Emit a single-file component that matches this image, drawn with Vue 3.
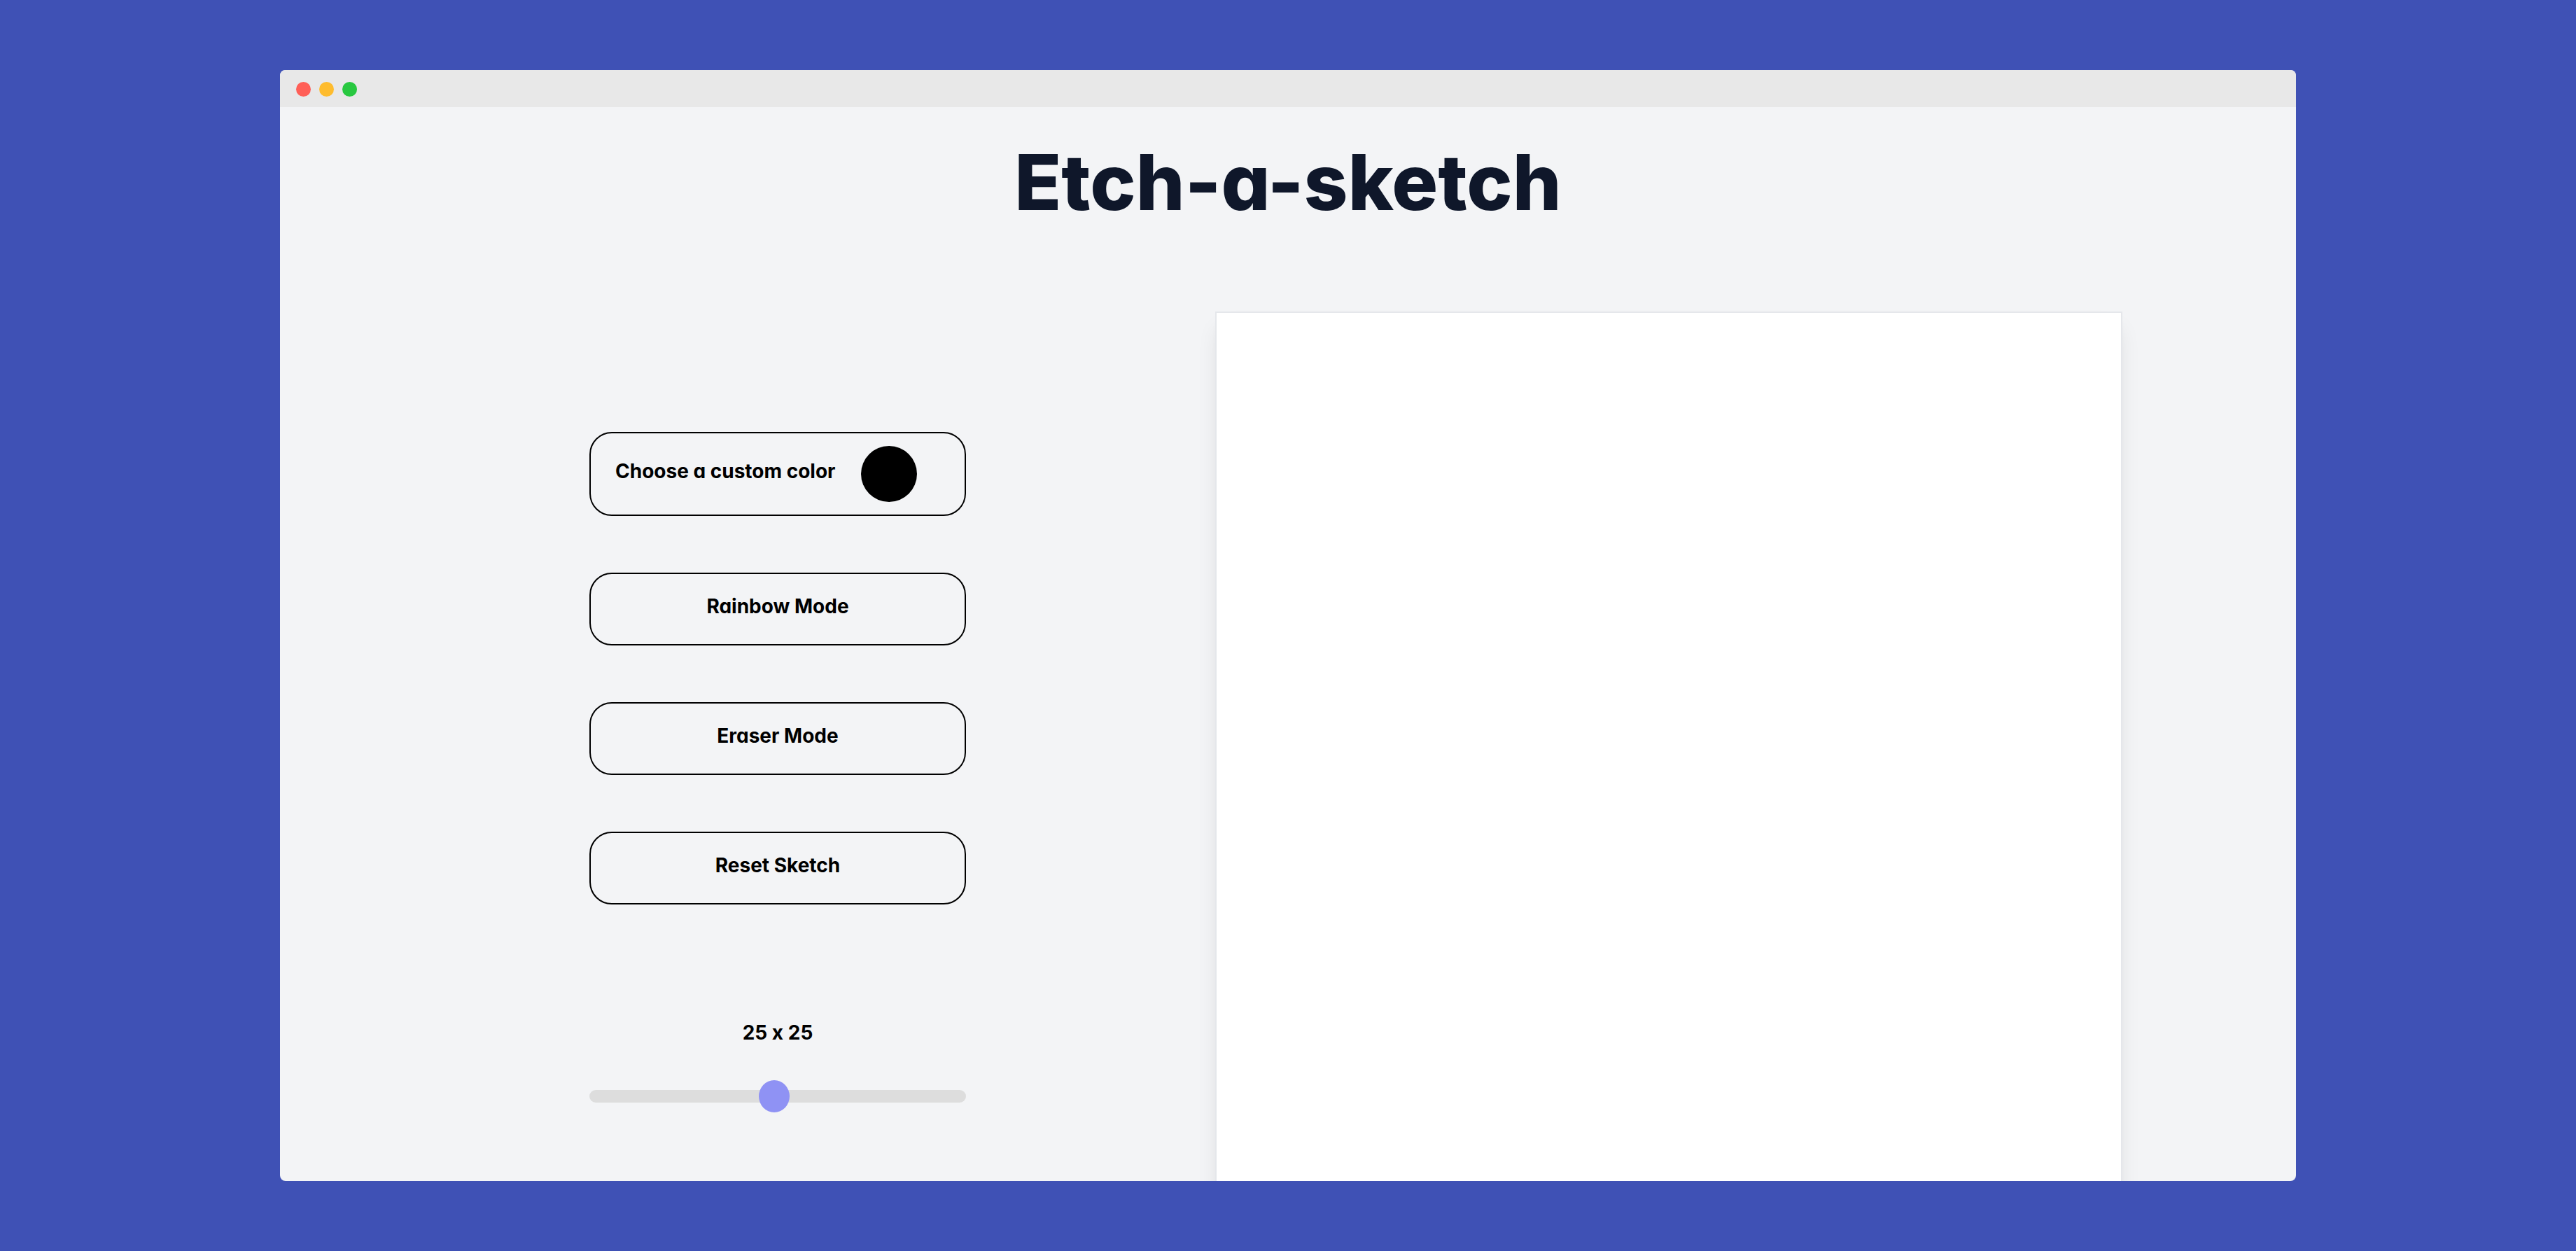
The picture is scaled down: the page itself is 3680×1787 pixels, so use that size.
<script setup>
import { ref } from 'vue'

const color = ref('#000000')
const size = ref(25)
const mode = ref('color')
</script>

<template>
  <main class="window">
    <div class="titlebar">
      <span class="dot close"></span>
      <span class="dot minimize"></span>
      <span class="dot expand"></span>
    </div>
    <h1 class="title">Etch-a-sketch</h1>
    <div class="layout">
      <section class="panel">
        <div class="picker">
          <label for="color">Choose a custom color</label>
          <input id="color" v-model="color" class="swatch" type="color" />
        </div>
        <button class="action" type="button" @click="mode = 'rainbow'">Rainbow Mode</button>
        <button class="action" type="button" @click="mode = 'eraser'">Eraser Mode</button>
        <button class="action" type="button" @click="mode = 'color'">Reset Sketch</button>
        <div class="size">
          <label for="size">{{ size }} x {{ size }}</label>
          <input id="size" v-model="size" class="slider" type="range" min="1" max="50" />
        </div>
      </section>
      <div class="canvas"></div>
    </div>
  </main>
</template>

<style>
body {
  background: #3f51b5;
}
</style>

<style scoped>
.window,
.window * {
  box-sizing: border-box;
}

.window {
  height: calc(100vh - 200px);
  margin: 100px 400px;
  overflow: hidden;
  border-radius: 8px;
  background: #f3f4f6;
  color: #000;
  font-family: Inter, "Open Sans", sans-serif;
  font-feature-settings: "cv11", "calt" 0;
  font-size: 28px;
  font-weight: 700;
  line-height: 40px;
}

.titlebar {
  display: flex;
  align-items: center;
  gap: 12px;
  height: 53px;
  padding: 2px 23px 0;
  background: #e8e8e8;
}

.dot {
  width: 21px;
  height: 21px;
  border-radius: 50%;
}

.close {
  background: #ff5f57;
}

.minimize {
  background: #febc2e;
}

.expand {
  background: #28c840;
}

.title {
  margin: 42px 0 120px;
  color: #0f172a;
  font-size: 110px;
  font-weight: 800;
  line-height: 130px;
  text-align: center;
}

.layout {
  display: grid;
  grid-template-columns: 442fr 538fr 356fr 1296fr 248fr;
  align-items: start;
}

.panel {
  display: flex;
  grid-column: 2;
  flex-direction: column;
  gap: 81px;
  padding-top: 172px;
}

.picker {
  display: flex;
  align-items: center;
  justify-content: space-between;
  height: 120px;
  padding: 0 68px 0 35px;
  border: 2px solid #000;
  border-radius: 32px;
  white-space: nowrap;
}

.picker label {
  padding-bottom: 8px;
}

.swatch {
  flex: none;
  width: 80px;
  height: 80px;
  padding: 0;
  appearance: none;
  border: 0;
  background: none;
  cursor: pointer;
}

.swatch::-webkit-color-swatch-wrapper {
  padding: 0;
}

.swatch::-webkit-color-swatch {
  border: 0;
  border-radius: 50%;
}

.action {
  height: 104px;
  padding: 0 36px 8px;
  border: 2px solid #000;
  border-radius: 32px;
  background: transparent;
  color: inherit;
  font: inherit;
  font-feature-settings: inherit;
  cursor: pointer;
}

.size {
  display: flex;
  flex-direction: column;
  align-items: center;
  gap: 48px;
  padding-top: 82px;
}

.slider {
  width: 100%;
  height: 46px;
  margin: 0;
  appearance: none;
  background: transparent;
}

.slider::-webkit-slider-runnable-track {
  height: 18px;
  border-radius: 9px;
  background: #ddd;
}

.slider::-webkit-slider-thumb {
  width: 44px;
  height: 46px;
  margin-top: -14px;
  appearance: none;
  border-radius: 50%;
  background: #8f92f4;
}

.canvas {
  grid-column: 4;
  aspect-ratio: 1;
  border: 2px solid #e5e7eb;
  background: #fff;
  box-shadow: 0 20px 30px -6px rgb(0 0 0 / 10%), 0 8px 12px -8px rgb(0 0 0 / 10%);
}
</style>
